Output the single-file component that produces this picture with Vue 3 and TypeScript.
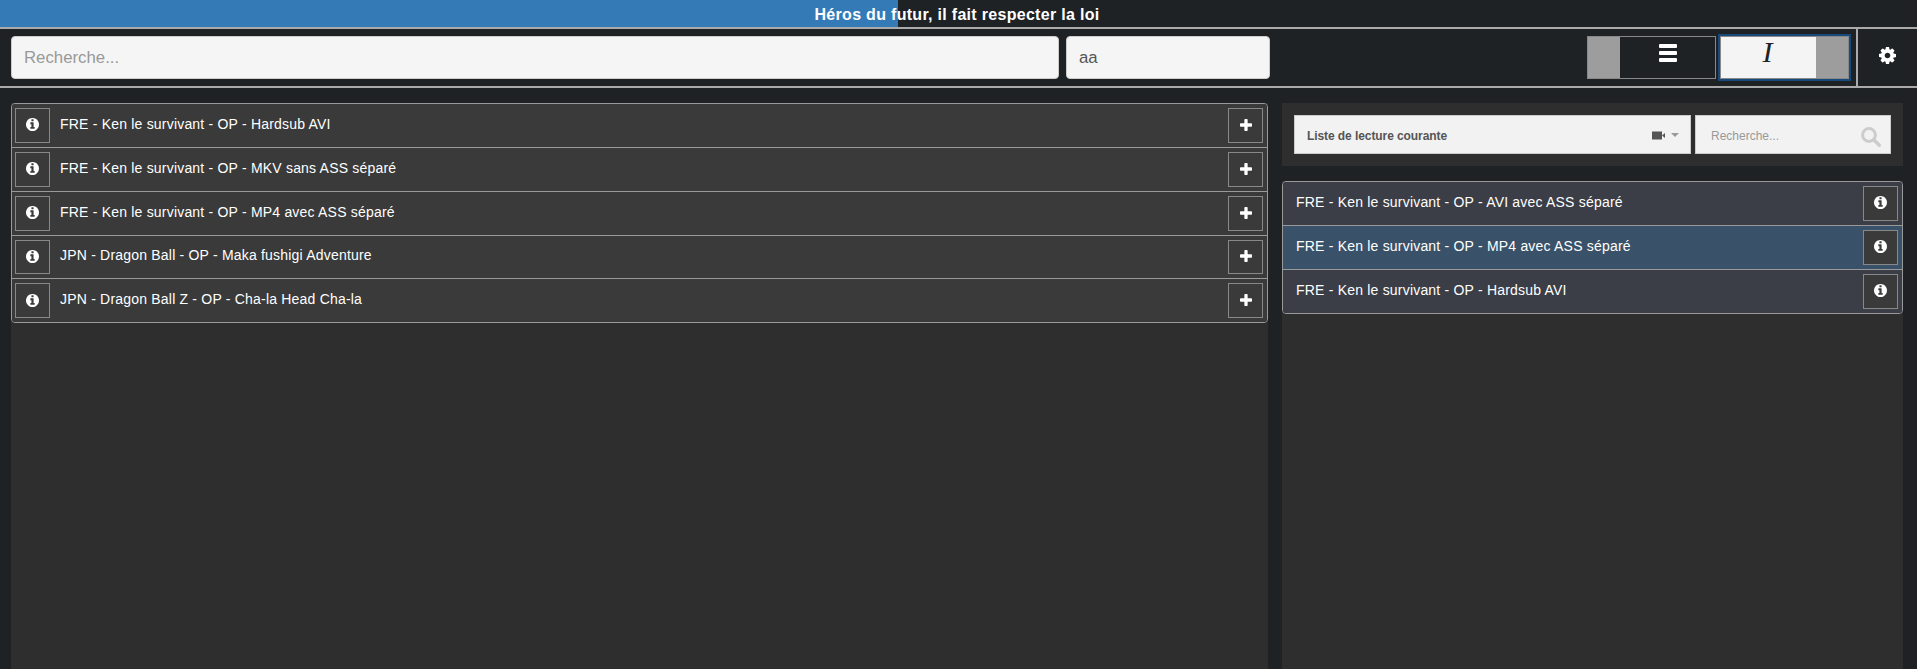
<script setup lang="ts">
import { ref } from 'vue'

const title = 'Héros du futur, il fait respecter la loi'
const progress = 46.85
const search = ref('')
const nickname = ref('aa')

const library = [
  'FRE - Ken le survivant - OP - Hardsub AVI',
  'FRE - Ken le survivant - OP - MKV sans ASS séparé',
  'FRE - Ken le survivant - OP - MP4 avec ASS séparé',
  'JPN - Dragon Ball - OP - Maka fushigi Adventure',
  'JPN - Dragon Ball Z - OP - Cha-la Head Cha-la'
]

const playlist = [
  { label: 'FRE - Ken le survivant - OP - AVI avec ASS séparé', playing: false },
  { label: 'FRE - Ken le survivant - OP - MP4 avec ASS séparé', playing: true },
  { label: 'FRE - Ken le survivant - OP - Hardsub AVI', playing: false }
]

const infoPath = 'M1152 1376v-160q0-14-9-23t-23-9h-96v-512q0-14-9-23t-23-9h-320q-14 0-23 9t-9 23v160q0 14 9 23t23 9h96v320h-96q-14 0-23 9t-9 23v160q0 14 9 23t23 9h448q14 0 23-9t9-23zm-128-896v-160q0-14-9-23t-23-9h-192q-14 0-23 9t-9 23v160q0 14 9 23t23 9h192q14 0 23-9t9-23zm640 416q0 209-103 385.5t-279.5 279.5-385.5 103-385.5-103-279.5-279.5-103-385.5 103-385.5 279.5-279.5 385.5-103 385.5 103 279.5 279.5 103 385.5z'
const plusPath = 'M1600 736v192q0 40-28 68t-68 28h-416v416q0 40-28 68t-68 28h-192q-40 0-68-28t-28-68v-416h-416q-40 0-68-28t-28-68v-192q0-40 28-68t68-28h416v-416q0-40 28-68t68-28h192q40 0 68 28t28 68v416h416q40 0 68 28t28 68z'
const cogPath = 'M1152 896q0-106-75-181t-181-75-181 75-75 181 75 181 181 75 181-75 75-181zm512-109v222q0 12-8 23t-20 13l-185 28q-19 54-39 91 35 50 107 138 10 12 10 25t-9 23q-27 37-99 108t-94 71q-12 0-26-9l-138-108q-44 23-91 38-16 136-29 186-7 28-36 28h-222q-14 0-24.5-8.5t-11.5-21.5l-28-184q-49-16-90-37l-141 107q-10 9-25 9-14 0-25-11-126-114-165-168-7-10-7-23 0-12 8-23 15-21 51-66.5t54-70.5q-27-50-41-99l-183-27q-13-2-21-12.5t-8-23.5v-222q0-12 8-23t19-13l186-28q14-46 39-92-40-57-107-138-10-12-10-24 0-10 9-23 26-36 98.5-107.5t94.5-71.5q13 0 26 10l138 107q44-23 91-38 16-136 29-186 7-28 36-28h222q14 0 24.5 8.5t11.5 21.5l28 184q49 16 90 37l142-107q9-9 24-9 13 0 25 10 129 119 165 170 7 8 7 22 0 12-8 23-15 21-51 66.5t-54 70.5q26 50 41 98l183 28q13 2 21 12.5t8 23.5z'
</script>

<template>
  <div class="page">
    <header class="titlebar">
      <div class="progress" :style="{ width: progress + '%' }"></div>
      <span class="title">{{ title }}</span>
    </header>

    <div class="toolbar">
      <input v-model="search" class="field field-search" type="text" placeholder="Recherche..." />
      <input v-model="nickname" class="field field-nick" type="text" />
      <div class="toggles">
        <button class="toggle">
          <span class="handle"></span>
          <span class="face">
            <svg width="18" height="18" viewBox="0 0 18 18" fill="#fff">
              <rect width="18" height="4" rx="1" />
              <rect y="7" width="18" height="4" rx="1" />
              <rect y="14" width="18" height="4" rx="1" />
            </svg>
          </span>
        </button>
        <button class="toggle toggle-on">
          <span class="face face-text"><span class="italic-i">I</span></span>
          <span class="handle"></span>
        </button>
      </div>
      <button class="settings" aria-label="Options">
        <svg width="17" height="17" viewBox="128 128 1536 1536" fill="#fff"><path :d="cogPath" /></svg>
      </button>
    </div>

    <main class="content">
      <section class="library">
        <ul class="list">
          <li v-for="item in library" :key="item" class="row">
            <button class="square">
              <svg width="13" height="13" viewBox="128 128 1536 1536" fill="#fff"><path :d="infoPath" /></svg>
            </button>
            <span class="label">{{ item }}</span>
            <button class="square">
              <svg width="12" height="12" viewBox="192 128 1408 1408" fill="#fff"><path :d="plusPath" /></svg>
            </button>
          </li>
        </ul>
      </section>

      <section class="side">
        <div class="side-head">
          <div class="select">
            <span class="select-label">Liste de lecture courante</span>
            <svg class="video" width="14" height="9" viewBox="0 0 14 9" fill="#555">
              <rect y="0.5" width="10" height="8" />
              <path d="M10 4.5 13 2v5z" />
            </svg>
            <span class="caret"></span>
          </div>
          <div class="side-search">
            <input class="side-input" type="text" placeholder="Recherche..." />
            <svg class="loupe" width="20" height="20" viewBox="0 0 20 20" fill="none" stroke="#ccc">
              <circle cx="8" cy="8" r="6.4" stroke-width="3" />
              <path d="M12.8 12.8 18.3 18.3" stroke-width="3.4" stroke-linecap="round" />
            </svg>
          </div>
        </div>

        <div class="side-body">
          <ul class="list">
            <li v-for="item in playlist" :key="item.label" class="row row-side" :class="{ playing: item.playing }">
              <span class="label">{{ item.label }}</span>
              <button class="square">
                <svg width="13" height="13" viewBox="128 128 1536 1536" fill="#fff"><path :d="infoPath" /></svg>
              </button>
            </li>
          </ul>
        </div>
      </section>
    </main>
  </div>
</template>

<style>
html,
body {
  margin: 0;
  background: #1e2225;
  overflow: hidden;
}
</style>

<style scoped>
.page {
  display: flex;
  flex-direction: column;
  height: 100vh;
  font-family: "Liberation Sans", Arial, sans-serif;
  color: #fff;
  background: #1e2225;
}

.titlebar {
  position: relative;
  flex: 0 0 auto;
  height: 27px;
  display: flex;
  align-items: center;
  justify-content: center;
  border-bottom: 2px solid #aaa;
}

.progress {
  position: absolute;
  left: 0;
  top: 0;
  bottom: 0;
  background: #337ab7;
}

.title {
  position: relative;
  padding: 2px 3px 0 0;
  font-size: 16px;
  font-weight: 700;
  letter-spacing: 0.3px;
}

.toolbar {
  flex: 0 0 auto;
  height: 57px;
  display: flex;
  align-items: center;
  padding-left: 11px;
  border-bottom: 2px solid #aaa;
}

.field {
  box-sizing: border-box;
  height: 43px;
  padding: 0 12px;
  border: 1px solid #ccc;
  border-radius: 4px;
  background: #f5f5f5;
  color: #555;
  font-family: inherit;
  font-size: 16.8px;
  outline: none;
}

.field::placeholder {
  color: #999;
}

.field-search {
  width: 1048px;
}

.field-nick {
  width: 204px;
  margin-left: 7px;
}

.toggles {
  display: flex;
  gap: 4px;
  margin-left: auto;
  margin-right: 7px;
}

.toggle {
  box-sizing: border-box;
  display: flex;
  width: 129px;
  height: 43px;
  padding: 0;
  border: 1px solid #888;
  background: #1e2225;
}

.toggle-on {
  outline: 2px solid #17497a;
  background: #f4f4f4;
}

.handle {
  flex: 0 0 32px;
  background: #9d9d9d;
}

.face {
  flex: 1;
  display: flex;
  justify-content: center;
  padding-top: 7px;
}

.face-text {
  padding-top: 4px;
  padding-right: 2px;
}

.italic-i {
  font-family: "Liberation Serif", "Times New Roman", serif;
  font-style: italic;
  font-size: 30px;
  line-height: 21px;
  color: #222;
}

.settings {
  align-self: stretch;
  width: 61px;
  display: flex;
  align-items: center;
  justify-content: center;
  padding: 0 0 4px;
  border: 0;
  border-left: 2px solid #aaa;
  background: none;
}

.content {
  flex: 1;
  min-height: 0;
  display: flex;
  gap: 14px;
  padding: 15px 14px 0 11px;
}

.library {
  flex: 0 0 1257px;
  background: #2e2e2e;
}

.list {
  list-style: none;
  margin: 0;
  padding: 0;
  border: 1px solid #999;
  border-radius: 4px;
  overflow: hidden;
}

.row {
  box-sizing: border-box;
  display: flex;
  align-items: center;
  gap: 10px;
  height: 43.8px;
  padding: 0 4px 0 3px;
  background: #3a3a3a;
  font-size: 14px;
  letter-spacing: 0.2px;
}

.row:first-child {
  height: 43px;
}

.row + .row {
  border-top: 1px solid #999;
}

.label {
  flex: 1;
  padding-bottom: 3px;
}

.square {
  box-sizing: border-box;
  flex: 0 0 35px;
  height: 34.8px;
  display: flex;
  align-items: center;
  justify-content: center;
  padding: 0 0 1px;
  border: 1px solid #888;
  background: #3a3a3a;
}

.side {
  flex: 1;
  display: flex;
  flex-direction: column;
  gap: 15px;
}

.side-head {
  flex: 0 0 63px;
  box-sizing: border-box;
  display: flex;
  gap: 4px;
  padding: 12px;
  background: #2e2e2e;
}

.select,
.side-search {
  position: relative;
  box-sizing: border-box;
  height: 39px;
  display: flex;
  align-items: center;
  border: 1px solid #ccc;
  background: #f2f2f2;
}

.select {
  flex: 1;
  padding: 2px 11px 0 12px;
}

.select-label {
  flex: 1;
  font-size: 12px;
  font-weight: 700;
  letter-spacing: -0.08px;
  color: #555;
}

.video {
  margin-right: 5px;
}

.caret {
  width: 0;
  height: 0;
  margin-top: -1px;
  border-left: 4px solid transparent;
  border-right: 4px solid transparent;
  border-top: 4px solid #999;
}

.side-search {
  flex: 0 0 196px;
}

.side-input {
  width: 100%;
  height: 100%;
  box-sizing: border-box;
  padding: 2px 40px 0 15px;
  border: 0;
  background: none;
  font-family: inherit;
  font-size: 12px;
  outline: none;
}

.side-input::placeholder {
  color: #999;
}

.loupe {
  position: absolute;
  right: 9px;
  top: 11px;
}

.side-body {
  flex: 1;
  background: #2e2e2e;
}

.row-side {
  padding: 0 4px 0 13px;
  background: #3b3e46;
}

.row-side.playing {
  background: #3a5269;
}
</style>
